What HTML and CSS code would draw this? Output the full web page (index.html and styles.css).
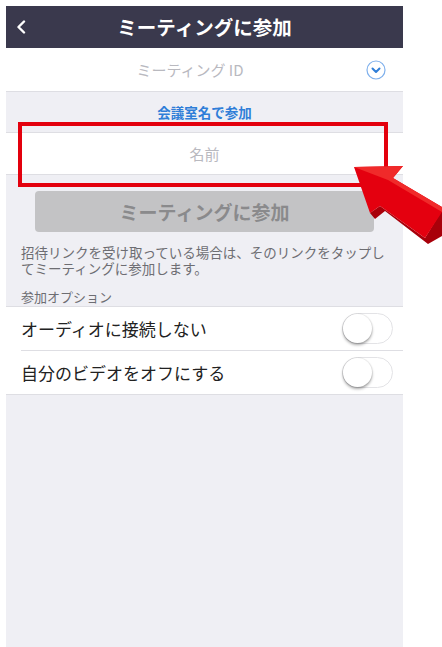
FILE: index.html
```html
<!DOCTYPE html>
<html lang="ja">
<head>
  <meta charset="UTF-8">
  <meta name="viewport" content="width=device-width, initial-scale=1.0">
  <title>ミーティングに参加</title>
  <link rel="stylesheet" href="styles.css">
</head>
<body>
  <div class="screen">
    <header class="topbar">
      <span class="back">
        <svg width="10" height="14" viewBox="0 0 10 14"><path d="M8 1.5 L2.5 7 L8 12.5" fill="none" stroke="#fff" stroke-width="2.4" stroke-linecap="round" stroke-linejoin="round"/></svg>
      </span>
      <h1>ミーティングに参加</h1>
      <span></span>
    </header>

    <div class="id-row">
      <span class="placeholder">ミーティング ID</span>
      <svg class="drop" width="20" height="20" viewBox="0 0 20 20">
        <circle cx="10" cy="10" r="9" fill="none" stroke="#7fb0ec" stroke-width="1.2"/>
        <path d="M6.5 8.5 L10 12 L13.5 8.5" fill="none" stroke="#2f7ed8" stroke-width="2" stroke-linecap="round" stroke-linejoin="round"/>
      </svg>
    </div>

    <div class="room-link">会議室名で参加</div>

    <div class="name-row">
      <span class="placeholder">名前</span>
    </div>

    <div class="join-wrap">
      <button class="join" disabled>ミーティングに参加</button>
    </div>

    <p class="hint">招待リンクを受け取っている場合は、そのリンクをタップしてミーティングに参加します。</p>

    <div class="section-title">参加オプション</div>
    <ul class="options">
      <li>
        <span>オーディオに接続しない</span>
        <span class="switch"><span class="knob"></span></span>
      </li>
      <li>
        <span>自分のビデオをオフにする</span>
        <span class="switch"><span class="knob"></span></span>
      </li>
    </ul>
  </div>

  <!-- 注釈 -->
  <div class="mark"></div>
  <svg class="arrow" width="102" height="90" viewBox="340 160 102 90">
    <polygon points="370,213 375,219 385,211 428,244 442,236 442,210 425,238 380,206" fill="#a8000a"/>
    <polygon points="354,167 403,166 393,178 442,207 442,212 425,238 380,206 370,213" fill="#e4000f"/>
    <polygon points="354,167 403,166 393,178 442,207 442,212 388,180" fill="#f02a2a"/>
  </svg>
</body>
</html>
```

FILE: styles.css
```css
body {
  margin: 0;
  background-color: #fff;
  font-family: "Noto Sans CJK JP", "Noto Sans", sans-serif;
  position: relative;
}
.screen {
  width: 397px;
  min-height: 641px;
  margin: 6px 0 0 6px;
  background-color: #efeff4;
}
.topbar {
  height: 42px;
  background-color: #3a394d;
  display: grid;
  grid-template-columns: 40px 1fr 40px;
  align-items: center;
}
.back {
  padding-left: 10px;
  display: flex;
}
.topbar h1 {
  margin: 0;
  color: #fff;
  font-size: 19.5px;
  font-weight: bold;
  text-align: center;
  line-height: 42px;
}
.id-row {
  height: 44px;
  background-color: #fff;
  display: flex;
  align-items: center;
  padding: 0 17px 0 12px;
  border-bottom: 1px solid #dedee3;
  box-sizing: border-box;
}
.id-row .placeholder {
  flex: 1;
  text-align: center;
  margin-right: 4px;
}
.placeholder {
  color: #b9b9bf;
  font-size: 15px;
}
.room-link {
  height: 40px;
  line-height: 40px;
  text-align: center;
  color: #2f7ed8;
  font-size: 13.5px;
  font-weight: bold;
}
.name-row {
  height: 43px;
  background-color: #fff;
  border-top: 1px solid #dedee3;
  border-bottom: 1px solid #dedee3;
  box-sizing: border-box;
  display: flex;
  align-items: center;
  justify-content: center;
}
.join-wrap {
  padding: 16px 29px 0;
}
.join {
  width: 100%;
  height: 41px;
  border: none;
  border-radius: 4px;
  background-color: #c3c3c5;
  color: #8a8a8c;
  font-family: inherit;
  font-size: 19px;
  font-weight: bold;
  padding: 0;
}
.hint {
  margin: 12px 13px 0 15px;
  font-size: 13.5px;
  line-height: 16px;
  color: #6d6d72;
}
.section-title {
  margin: 13px 0 0 15px;
  font-size: 13px;
  line-height: 16px;
  color: #6d6d72;
  padding-bottom: 1px;
}
.options {
  list-style: none;
  margin: 0;
  padding: 0;
  background-color: #fff;
  border-top: 1px solid #dedee3;
  border-bottom: 1px solid #dedee3;
}
.options li {
  height: 43px;
  margin-left: 15px;
  padding-right: 10px;
  display: flex;
  align-items: center;
  justify-content: space-between;
  font-size: 17px;
  color: #222;
}
.options li + li {
  border-top: 1px solid #dedee3;
}
.switch {
  width: 49px;
  height: 29px;
  border: 1px solid #e3e3e6;
  border-radius: 16px;
  position: relative;
  background-color: #fff;
}
.knob {
  position: absolute;
  left: 0;
  top: 0;
  width: 29px;
  height: 29px;
  border-radius: 50%;
  background-color: #fff;
  box-shadow: 0 2px 3px rgba(0, 0, 0, 0.35), 0 0 0 1px rgba(0, 0, 0, 0.05);
}
.mark {
  position: absolute;
  left: 18px;
  top: 122px;
  width: 362px;
  height: 57px;
  border: 4px solid #e3000d;
}
.arrow {
  position: absolute;
  left: 340px;
  top: 160px;
}
```
